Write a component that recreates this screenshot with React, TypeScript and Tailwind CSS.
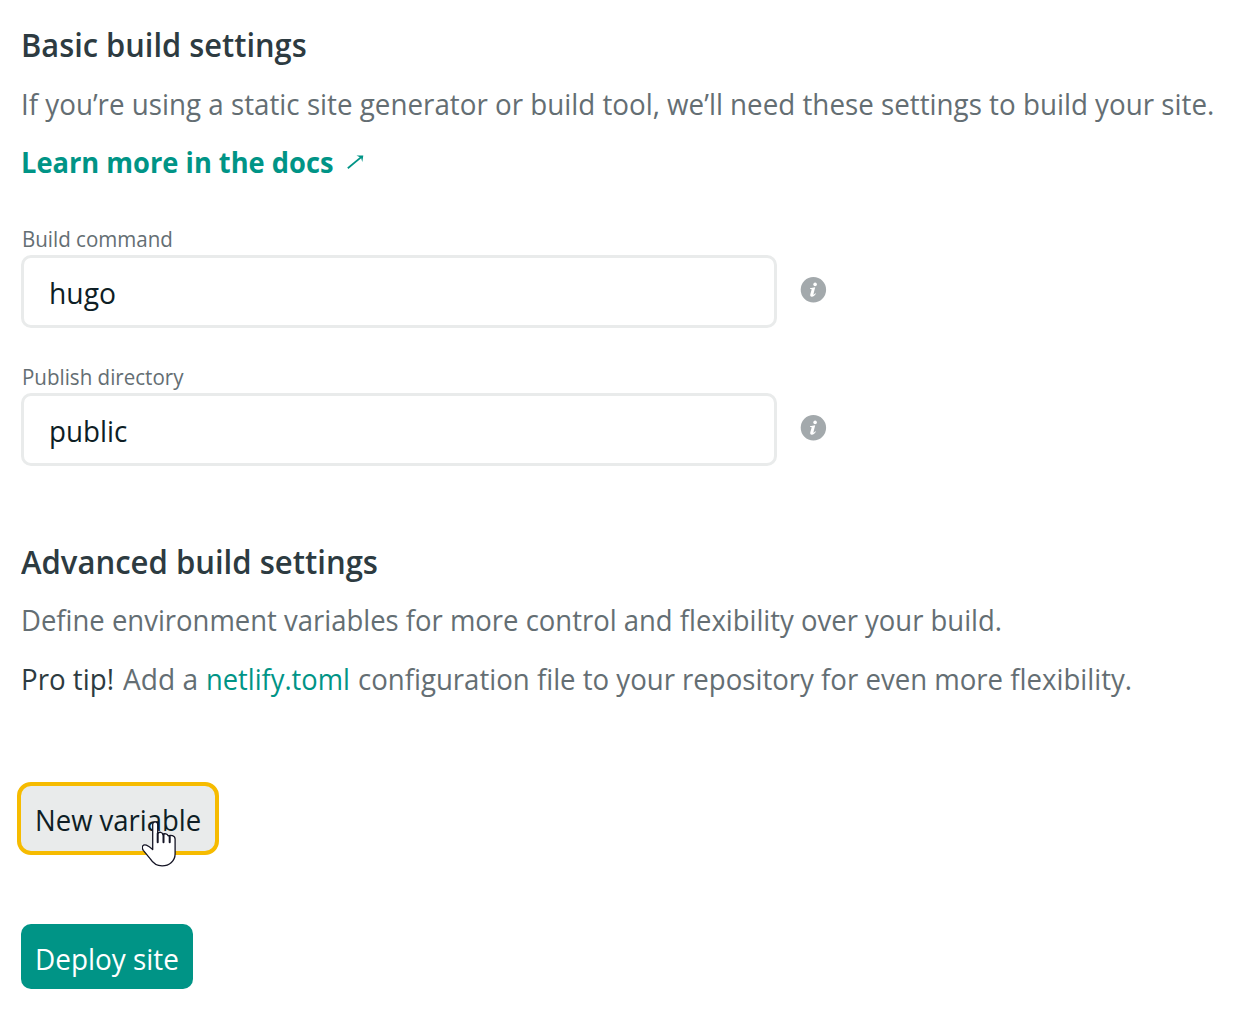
function Info() {
  return (
    <svg className="mb-1 ml-[23px] h-[26px] w-[27px]" viewBox="0 0 27 26">
      <circle cx="13.4" cy="12.8" r="12.7" fill="#a3a9ac" />
      <path
        d="M10 11.3C11.8 11.1 13.2 10.7 15.2 10.3L13.5 17C13.3 18.1 13.8 17.9 15.2 16.2L15.9 16.8C14.6 18.9 13.1 19.8 11.7 19.7 10.4 19.6 10 18.5 10.3 17.2L11.5 12.9C11.7 12.1 11.3 12.1 10 12.1Z"
        fill="#fff"
      />
      <circle cx="15.1" cy="7.4" r="1.8" fill="#fff" />
    </svg>
  );
}

function Field({ label, value, valueScale }: { label: string; value: string; valueScale: string }) {
  return (
    <div className="h-[138px]">
      <div className="h-[29px] w-fit origin-left scale-x-[0.934] pl-px text-[22px] leading-[25px] text-[#646e73]">{label}</div>
      <div className="flex items-center">
        <div className="flex h-[73px] w-[756px] items-center rounded-[10px] border-[3px] border-[#e9ebeb] pl-[25px] pt-px text-[29px] text-[#0e1e25]">
          <span className={'origin-left ' + valueScale}>{value}</span>
        </div>
        <Info />
      </div>
    </div>
  );
}

export default function App() {
  return (
    <main className="h-[1027px] w-[1239px] overflow-hidden whitespace-nowrap bg-white pl-[21px] pt-[16px] font-['Open_Sans','Noto_Sans',sans-serif] text-[29px] leading-[57px] text-[#646e73]">
      <h2 className="h-[59px] w-fit origin-left scale-x-[0.934] text-[33px] font-semibold leading-[58px] text-[#2d3b41]">Basic build settings</h2>
      <p className="h-[58px] w-fit origin-left scale-x-[0.957]">If you’re using a static site generator or build tool, we’ll need these settings to build your site.</p>
      <p className="flex h-[93px] font-bold text-[#009486]">
        <span className="w-[326px] origin-left scale-x-[0.94]">Learn more in the docs</span>
        <svg className="mt-[21px] h-4 w-[17px]" viewBox="0 0 17 16" fill="none" stroke="currentColor" strokeWidth="1.8">
          <path d="M.8 14.3 14.8 2.6" />
          <path d="M9.5 1.5h6.8l-1 6.5-1.2-4.1Z" fill="currentColor" stroke="none" />
        </svg>
      </p>
      <Field label="Build command" value="hugo" valueScale="scale-x-[0.975]" />
      <Field label="Publish directory" value="public" valueScale="scale-x-[0.957]" />
      <h2 className="mt-[31px] h-[58px] w-fit origin-left scale-x-[0.941] text-[33px] font-semibold leading-[58px] text-[#2d3b41]">Advanced build settings</h2>
      <p className="h-[59px] w-fit origin-left scale-x-[0.947]">Define environment variables for more control and flexibility over your build.</p>
      <p className="flex h-[58px]">
        <span className="w-[101.5px] origin-left scale-x-[0.955] text-[#2d3b41]">Pro tip! </span>
        <span className="w-[83.5px] origin-left scale-x-[0.97]">Add a </span>
        <span className="w-[151.5px] origin-left scale-x-[0.941] text-[#009486]">netlify.toml</span>
        <span className="origin-left scale-x-[0.951]"> configuration file to your repository for even more flexibility.</span>
      </p>
      <div className="relative -ml-[4px] mt-[74px] h-[73px] w-[202px]">
        <button className="flex h-[73px] w-[202px] items-center rounded-[14px] border-4 border-[#f6bb00] bg-[#e9ebeb] pl-[14px] pt-px text-[#0e1e25]">
          <span className="origin-left scale-x-[0.948]">New variable</span>
        </button>
        <svg className="absolute left-[125px] top-[39px] h-[46px] w-[36px]" viewBox="0 0 36 46" fill="#fff" stroke="#151525" strokeWidth="1.3" strokeLinejoin="round" strokeLinecap="round">
          <path d="M10.7 28.5V3.6C10.7-.1 15.7-.1 15.7 3.6v8.9c1.5-2 4.8-1.5 5.2 1.1 1.5-1.5 4.5-.9 5.2 1.3 2.2-1.3 7-.4 7 3.2V33c0 6.8-5.6 11.8-13 11.8-5.5 0-9.2-2.9-11.8-7L1.3 29.3C-1 25.5 1.2 23 4.4 24.2c2.6 1 4.4 2.6 6.3 4.3Z" />
          <path d="M15.7 12.5v8.7M21.5 13.6v7.6M27.7 15v6.2" strokeWidth="2" />
        </svg>
      </div>
      <button className="mt-[69px] flex h-[65px] w-[172px] items-center rounded-[10px] bg-[#009486] pl-[14px] pt-[4px] text-white">
        <span className="origin-left scale-x-[0.962]">Deploy site</span>
      </button>
    </main>
  );
}
